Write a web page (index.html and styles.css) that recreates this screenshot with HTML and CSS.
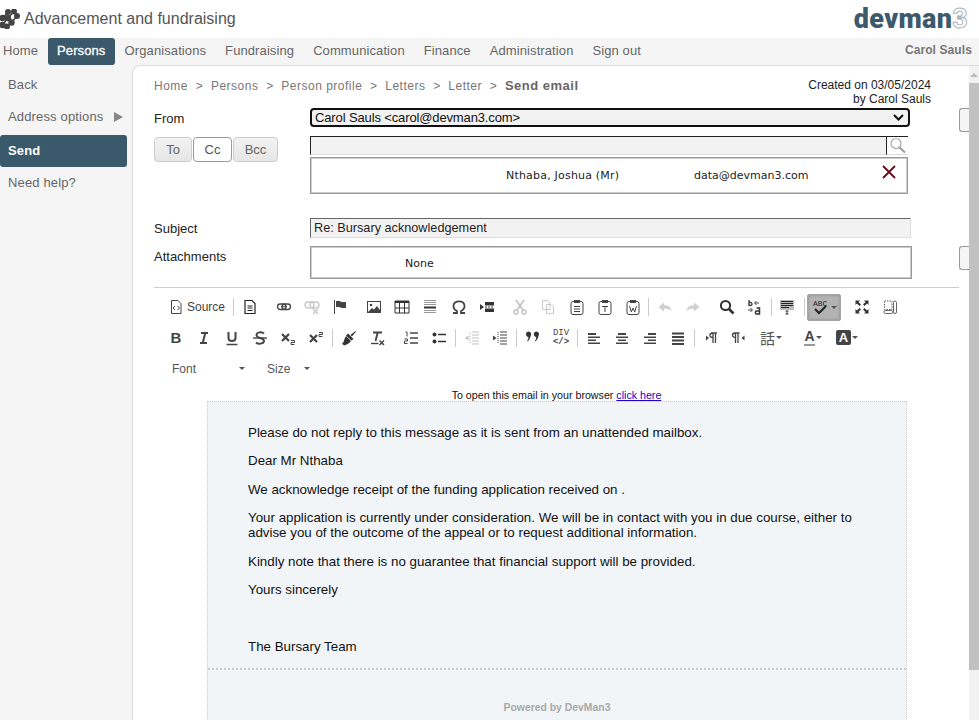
FILE: index.html
```html
<!DOCTYPE html>
<html lang="en">
<head>
    <meta charset="UTF-8">
    <meta name="viewport" content="width=device-width, initial-scale=1.0">
    <title>Send email</title>
    <link rel="stylesheet" href="styles.css">
</head>
<body>

<!-- header -->
<header class="top">
    <div class="brand">
        <svg class="brand-icon" width="20" height="20" viewBox="0 0 20 20">
            <g stroke="#444" stroke-width="1.6" stroke-linecap="round" fill="#444">
                <path d="M8 3 L2.5 9 M14 2.5 L8 9 L2.5 16 M17 7 L11.5 13.5 L7 17.5"/>
                <circle cx="8" cy="3" r="2.2"/>
                <circle cx="14" cy="2.5" r="2.2"/>
                <circle cx="2.5" cy="9" r="2.4"/>
                <circle cx="8" cy="9" r="2.4"/>
                <circle cx="17" cy="7" r="2.2"/>
                <circle cx="11.5" cy="13.5" r="2.4"/>
                <circle cx="2.5" cy="16" r="2.4"/>
                <circle cx="7" cy="17.5" r="2.2"/>
            </g>
        </svg>
        <span class="brand-title">Advancement and fundraising</span>
    </div>
    <div class="logo">de<span class="logo-v">v</span>man<span class="logo-three">3</span></div>
</header>

<nav class="menu">
    <a>Home</a>
    <a class="active">Persons</a>
    <a>Organisations</a>
    <a>Fundraising</a>
    <a>Communication</a>
    <a>Finance</a>
    <a>Administration</a>
    <a>Sign out</a>
    <span class="menu-user">Carol Sauls</span>
</nav>

<div class="layout">
    <aside class="side">
        <a>Back</a>
        <a class="has-arrow">Address options <span class="side-arrow"></span></a>
        <a class="active">Send</a>
        <a>Need help?</a>
    </aside>

    <main class="card">
        <div class="card-inner">
            <div class="crumbs-row">
                <div class="crumbs">
                    <span>Home</span><i>&gt;</i><span>Persons</span><i>&gt;</i><span>Person profile</span><i>&gt;</i><span>Letters</span><i>&gt;</i><span>Letter</span><i>&gt;</i><b>Send email</b>
                </div>
                <div class="created">Created on 03/05/2024<br>by Carol Sauls</div>
            </div>

            <div class="row row-from">
                <label class="lbl">From</label>
                <div class="fake-select">Carol Sauls &lt;carol@devman3.com&gt;
                    <svg width="11" height="7" viewBox="0 0 11 7"><path d="M1 1 L5.5 5.5 L10 1" fill="none" stroke="#111" stroke-width="2"/></svg>
                </div>
                <div class="clip-btn"></div>
            </div>

            <div class="row row-to">
                <div class="to-tabs">
                    <button class="tab tab-to">To</button>
                    <button class="tab tab-cc">Cc</button>
                    <button class="tab tab-bcc">Bcc</button>
                </div>
                <div class="to-fields">
                    <div class="search">
                        <div class="search-input"></div>
                        <div class="search-btn">
                            <svg width="18" height="17" viewBox="0 0 18 17"><circle cx="7" cy="6.5" r="5" fill="none" stroke="#aaa" stroke-width="1.2"/><path d="M10.5 10.5 L16 15.5" stroke="#999" stroke-width="1.8"/></svg>
                        </div>
                    </div>
                    <div class="recipient">
                        <span class="rec-name">Nthaba, Joshua (Mr)</span>
                        <span class="rec-mail">data@devman3.com</span>
                        <svg class="rec-x" width="14" height="14" viewBox="0 0 14 14"><path d="M1 1 L13 13 M13 1 L1 13" stroke="#6d0a1a" stroke-width="1.8"/></svg>
                    </div>
                </div>
            </div>

            <div class="row row-subject">
                <label class="lbl">Subject</label>
                <div class="subject">Re: Bursary acknowledgement</div>
            </div>

            <div class="row row-attach">
                <label class="lbl lbl-attach">Attachments</label>
                <div class="attach"><span>None</span></div>
                <div class="clip-btn"></div>
            </div>

            <hr class="rule">

            <!-- editor toolbar -->
            <div class="bar bar-1">
                <a class="tb tb-source">
                    <svg width="16" height="16" viewBox="0 0 16 16"><path d="M3.5 1.5 H10 L13 4.5 V14.5 H3.5 Z" fill="none" stroke="#444"/><path d="M7 7 L5 9 L7 11 M9.5 7 L11.5 9 L9.5 11" fill="none" stroke="#444"/></svg>
                    Source
                </a>
                <s class="sep"></s>
                <a class="tb"><svg width="16" height="16" viewBox="0 0 16 16"><path d="M3 1.5 H10 L13 4.5 V14.5 H3 Z" fill="none" stroke="#222" stroke-width="1.2"/><path d="M5.5 7 H10.5 M5.5 9 H10.5 M5.5 11.5 H10.5" stroke="#222"/></svg></a>
                <span class="gap"></span>
                <a class="tb"><svg width="16" height="16" viewBox="0 0 16 16"><rect x="1.5" y="5" width="8.5" height="5.5" rx="2.7" fill="none" stroke="#444" stroke-width="1.3"/><rect x="6" y="5" width="8.5" height="5.5" rx="2.7" fill="none" stroke="#444" stroke-width="1.3"/><path d="M5 7.7 H11" stroke="#444"/></svg></a>
                <a class="tb off"><svg width="16" height="16" viewBox="0 0 16 16"><rect x="1" y="3" width="9" height="6" rx="3" fill="none" stroke="#888" stroke-width="1.4"/><rect x="6" y="3" width="9" height="6" rx="3" fill="none" stroke="#888" stroke-width="1.4"/><path d="M9 10 L14 15 M14 10 L9 15" stroke="#888" stroke-width="1.4"/></svg></a>
                <a class="tb"><svg width="16" height="16" viewBox="0 0 16 16"><path d="M2.5 1 V15" stroke="#444"/><path d="M4 2 H8 L9 3 H14 V9 H9 L8 8 H4 Z" fill="#444"/></svg></a>
                <span class="gap"></span>
                <a class="tb"><svg width="16" height="16" viewBox="0 0 16 16"><rect x="1.5" y="2.5" width="13" height="11" fill="#fff" stroke="#444"/><circle cx="5" cy="6" r="1.3" fill="#444"/><path d="M2 13 L6 9 L8 10.5 L11 7 L14 11 V13 Z" fill="#444"/></svg></a>
                <a class="tb"><svg width="16" height="16" viewBox="0 0 16 16"><path d="M1 2 H15 V14 H1 Z" fill="#fff" stroke="#333"/><path d="M1 2 H15 V4 H1 Z" fill="#333"/><path d="M1 9 H15 M5.5 4 V14 M10.5 4 V14" stroke="#333"/></svg></a>
                <a class="tb"><svg width="16" height="16" viewBox="0 0 16 16"><path d="M2 1.5 H14 M2 3.5 H14 M2 5.5 H14 M2 11.5 H14 M2 13.5 H14" stroke="#999"/><path d="M2 7.5 H14 V9.5 H2 Z" fill="#333"/></svg></a>
                <span class="gap-1"></span>
                <a class="tb"><svg width="16" height="16" viewBox="0 0 16 16"><path d="M2 14 H6 V12 C3.5 11 2.5 9 2.5 7 C2.5 4 5 2.3 8 2.3 C11 2.3 13.5 4 13.5 7 C13.5 9 12.5 11 10 12 V14 H14" fill="none" stroke="#444" stroke-width="1.8"/></svg></a>
                <a class="tb"><svg width="16" height="16" viewBox="0 0 16 16"><path d="M1 5 L5 8 L1 11 Z" fill="#333"/><path d="M6 3 H15 V6.5 H6 Z M6 9.5 H15 V13 H6 Z" fill="#333"/><path d="M6 8 H15" stroke="#333" stroke-dasharray="2 1"/></svg></a>
                <span class="gap-5"></span>
                <a class="tb off"><svg width="16" height="16" viewBox="0 0 16 16"><path d="M4 1 L11 11 M12 1 L5 11" stroke="#777" stroke-width="1.6"/><circle cx="4" cy="13" r="2" fill="none" stroke="#777" stroke-width="1.4"/><circle cx="12" cy="13" r="2" fill="none" stroke="#777" stroke-width="1.4"/></svg></a>
                <a class="tb off"><svg width="16" height="16" viewBox="0 0 16 16"><path d="M2.5 1.5 H7.5 L10 4 V10.5 H2.5 Z M6.5 5.5 H11 L13.5 8 V14.5 H6.5 Z" fill="#fff" stroke="#888"/></svg></a>
                <span class="gap-1"></span>
                <a class="tb"><svg width="16" height="16" viewBox="0 0 16 16"><rect x="2" y="2.5" width="12" height="13" rx="2" fill="none" stroke="#444"/><rect x="5" y="1" width="6" height="3" fill="#444"/><path d="M5 7.5 H11 M5 10 H11 M5 12.5 H11" stroke="#444"/></svg></a>
                <a class="tb"><svg width="16" height="16" viewBox="0 0 16 16"><rect x="2" y="2.5" width="12" height="13" rx="2" fill="none" stroke="#444"/><rect x="5" y="1" width="6" height="3" fill="#444"/><path d="M5 7.5 H11 M8 7.5 V13" stroke="#444"/></svg></a>
                <a class="tb"><svg width="16" height="16" viewBox="0 0 16 16"><rect x="2" y="2.5" width="12" height="13" rx="2" fill="none" stroke="#444"/><rect x="5" y="1" width="6" height="3" fill="#444"/><path d="M4.5 7 L6.3 13 L8 9 L9.7 13 L11.5 7" fill="none" stroke="#444"/></svg></a>
                <s class="sep sep-a"></s>
                <a class="tb off"><svg width="16" height="16" viewBox="0 0 16 16"><path d="M1.5 8 L7 3.5 V6.3 C11 6.3 14 8 14.5 12 C12.5 10 10.5 9.7 7 9.7 V12.5 Z" fill="#999"/></svg></a>
                <a class="tb off"><svg width="16" height="16" viewBox="0 0 16 16"><path d="M14.5 8 L9 3.5 V6.3 C5 6.3 2 8 1.5 12 C3.5 10 5.5 9.7 9 9.7 V12.5 Z" fill="#999"/></svg></a>
                <span class="gap"></span>
                <a class="tb"><svg width="16" height="16" viewBox="0 0 16 16"><circle cx="6.5" cy="6.5" r="4.6" fill="none" stroke="#333" stroke-width="2"/><path d="M10 10 L14.5 14.5" stroke="#333" stroke-width="2.6"/></svg></a>
                <a class="tb"><svg width="16" height="16" viewBox="0 0 16 16"><path d="M2 1 V7 M2 4.5 C2 3 5 3 5 5 C5 7 2 7 2 5" fill="none" stroke="#333" stroke-width="1.3"/><path d="M12 4 H8 M9.5 2 L7.5 4 L9.5 6" fill="none" stroke="#444"/><path d="M1 11 H5 M3.5 9 L5.5 11 L3.5 13" fill="none" stroke="#444"/><path d="M9.5 9 H12.5 V15 H9.5 C8 15 8 12 9.5 12 H12.5" fill="none" stroke="#333" stroke-width="1.5"/></svg></a>
                <s class="sep sep-b"></s>
                <a class="tb"><svg width="16" height="16" viewBox="0 0 16 16"><rect x="1" y="1" width="14" height="10" fill="#bbb"/><path d="M2 2.5 H14 M2 4.5 H14 M2 6.5 H14 M2 8.5 H10" stroke="#222"/><path d="M6.5 12 H9.5 M8 12 V15 M6.5 15 H9.5" stroke="#333"/></svg></a>
                <s class="sep sep-c"></s>
                <a class="tb tb-spell">
                    <svg width="18" height="18" viewBox="0 0 18 18"><text x="1" y="8" class="abc">ABC</text><path d="M3 11 L7 15 L14 8" fill="none" stroke="#222" stroke-width="2"/></svg>
                    <em class="caret"></em>
                </a>
                <span class="gap-7"></span>
                <a class="tb"><svg width="16" height="16" viewBox="0 0 16 16"><path d="M1.5 1.5 H6 L4.5 3 L7 5.5 L5.5 7 L3 4.5 L1.5 6 Z M14.5 1.5 V6 L13 4.5 L10.5 7 L9 5.5 L11.5 3 L10 1.5 Z M1.5 14.5 V10 L3 11.5 L5.5 9 L7 10.5 L4.5 13 L6 14.5 Z M14.5 14.5 H10 L11.5 13 L9 10.5 L10.5 9 L13 11.5 L14.5 10 Z" fill="#333"/></svg></a>
                <a class="tb"><svg width="16" height="16" viewBox="0 0 16 16"><path d="M2.5 2 H10 V10.5 H2.5 Z" fill="none" stroke="#666" stroke-dasharray="1.5 1"/><rect x="2" y="11.5" width="9" height="3" rx="1.5" fill="none" stroke="#666"/><rect x="11.5" y="2" width="3" height="12.5" rx="1.5" fill="none" stroke="#666"/></svg></a>
            </div>

            <div class="bar bar-2">
                <a class="tb"><b class="fmt">B</b></a>
                <a class="tb"><svg width="16" height="16" viewBox="0 0 16 16"><path d="M5 3 H12 M4 13 H11 M9.3 3 L6.7 13" stroke="#444" stroke-width="2" fill="none"/></svg></a>
                <a class="tb"><svg width="16" height="16" viewBox="0 0 16 16"><path d="M4.5 2 V8 C4.5 12 11.5 12 11.5 8 V2" fill="none" stroke="#444" stroke-width="2"/><path d="M2.5 14.5 H13.5" stroke="#444" stroke-width="1.5"/></svg></a>
                <a class="tb"><svg width="16" height="16" viewBox="0 0 16 16"><path d="M12 3.5 C10 1.5 4.5 2 4.5 5 C4.5 9 12 7 12 11 C12 14 6 14.5 4 12.5" fill="none" stroke="#444" stroke-width="1.9"/><path d="M1 8 H15" stroke="#444" stroke-width="1.4"/></svg></a>
                <a class="tb"><svg width="16" height="16" viewBox="0 0 16 16"><path d="M2 4 L9 11 M9 4 L2 11" stroke="#444" stroke-width="2.2"/><path d="M11 10.5 H14.5 V12.5 H11 V14.5 H14.5" fill="none" stroke="#444"/></svg></a>
                <a class="tb"><svg width="16" height="16" viewBox="0 0 16 16"><path d="M2 5 L9 12 M9 5 L2 12" stroke="#444" stroke-width="2.2"/><path d="M11 2.5 H14.5 V4.5 H11 V6.5 H14.5" fill="none" stroke="#444"/></svg></a>
                <s class="sep"></s>
                <a class="tb"><svg width="16" height="16" viewBox="0 0 16 16"><path d="M9.5 5 L14.5 1 L15 1.5 L11 6.5 Z" fill="#333"/><path d="M7 3.5 L12.5 9 L10.5 10.5 L5 5.5 Z" fill="#333"/><path d="M5 6 L10 11 C8.5 13 6 15 3 15.5 L1 13.5 C3 13 3 9 5 6 Z" fill="#333"/></svg></a>
                <a class="tb"><svg width="16" height="16" viewBox="0 0 16 16"><path d="M4 2.5 H13 M8.7 2.5 L6.5 11" stroke="#444" stroke-width="1.9" fill="none"/><path d="M2 13.5 H9.5" stroke="#444" stroke-width="1.4"/><path d="M10.5 10.5 L15 15 M15 10.5 L10.5 15" stroke="#444" stroke-width="1.5"/></svg></a>
                <span class="gap"></span>
                <a class="tb"><svg width="16" height="16" viewBox="0 0 16 16"><path d="M7 3 H15 M7 8 H15 M7 13 H15" stroke="#444" stroke-width="1.3"/><path d="M2.5 2 H4 V6.5 M1.5 9 H4.5 V11 H1.5 V13.5 H4.5" fill="none" stroke="#444"/></svg></a>
                <a class="tb"><svg width="16" height="16" viewBox="0 0 16 16"><circle cx="3.5" cy="4.5" r="2" fill="#333"/><circle cx="3.5" cy="11.5" r="2" fill="#333"/><path d="M7 4.5 H15 M7 11.5 H15" stroke="#333" stroke-width="1.5"/></svg></a>
                <s class="sep"></s>
                <a class="tb off"><svg width="16" height="16" viewBox="0 0 16 16"><path d="M8 2 H15 M8 5 H15 M8 8 H15 M8 11 H15 M8 14 H15" stroke="#777"/><path d="M6 2 V14" stroke="#777" stroke-dasharray="1 1"/><path d="M1 8 L4.5 5.5 V10.5 Z" fill="#777"/></svg></a>
                <a class="tb"><svg width="16" height="16" viewBox="0 0 16 16"><path d="M8 2 H15 M8 5 H15 M8 8 H15 M8 11 H15 M8 14 H15" stroke="#444"/><path d="M6 2 V14" stroke="#444" stroke-dasharray="1 1"/><path d="M4.5 8 L1 5.5 V10.5 Z" fill="#444"/></svg></a>
                <s class="sep"></s>
                <a class="tb"><svg width="16" height="16" viewBox="0 0 16 16"><path d="M1 4 A2.6 2.6 0 1 1 5.8 5.5 C5.4 8 4 10.5 2.5 11.5 L2 11 C3 10 3.4 8.6 3.4 7 C2 7 1 5.6 1 4 Z M8.8 4 A2.6 2.6 0 1 1 13.6 5.5 C13.2 8 11.8 10.5 10.3 11.5 L9.8 11 C10.8 10 11.2 8.6 11.2 7 C9.8 7 8.8 5.6 8.8 4 Z" fill="#333"/></svg></a>
                <a class="tb tb-div"><span class="div-t">DIV</span><span class="div-c">&lt;/&gt;</span></a>
                <s class="sep"></s>
                <a class="tb"><svg width="16" height="16" viewBox="0 0 16 16"><path d="M2 3 H10 V5 H2 Z M2 6.5 H14 V8 H2 Z M2 9.5 H10 V11 H2 Z M2 12.5 H14 V14 H2 Z" fill="#444"/></svg></a>
                <a class="tb"><svg width="16" height="16" viewBox="0 0 16 16"><path d="M4 3 H12 V5 H4 Z M2 6.5 H14 V8 H2 Z M4 9.5 H12 V11 H4 Z M2 12.5 H14 V14 H2 Z" fill="#444"/></svg></a>
                <a class="tb"><svg width="16" height="16" viewBox="0 0 16 16"><path d="M6 3 H14 V5 H6 Z M2 6.5 H14 V8 H2 Z M6 9.5 H14 V11 H6 Z M2 12.5 H14 V14 H2 Z" fill="#444"/></svg></a>
                <a class="tb"><svg width="16" height="16" viewBox="0 0 16 16"><path d="M2 2.5 H14 V4.5 H2 Z M2 6 H14 V8 H2 Z M2 9.5 H14 V11.5 H2 Z M2 13 H14 V15 H2 Z" fill="#444"/></svg></a>
                <s class="sep"></s>
                <a class="tb"><svg width="16" height="16" viewBox="0 0 16 16"><path d="M3 5.5 L6 8 L3 10.5 Z" fill="#444"/><path d="M8 3 H14 M10 3 V13 M12.5 3 V13 M10 7.5 C8 7.5 7 6.5 7 5.2 C7 4 8 3 10 3" fill="none" stroke="#444" stroke-width="1.3"/></svg></a>
                <a class="tb"><svg width="16" height="16" viewBox="0 0 16 16"><path d="M13.5 5.5 L10.5 8 L13.5 10.5 Z" fill="#444"/><path d="M2.5 3 H8.5 M4.5 3 V13 M7 3 V13 M4.5 7.5 C2.5 7.5 1.5 6.5 1.5 5.2 C1.5 4 2.5 3 4.5 3" fill="none" stroke="#444" stroke-width="1.3"/></svg></a>
                <span class="gap-3"></span>
                <a class="tb tb-lang"><span class="lang-glyph">話</span><em class="caret caret-tight"></em></a>
                <span class="gap-11"></span>
                <a class="tb tb-color">
                    <span class="a-text">A</span>
                    <em class="caret caret-tight"></em>
                </a>
                <a class="tb tb-color tb-bg">
                    <span class="a-bg">A</span>
                    <em class="caret caret-tight"></em>
                </a>
            </div>

            <div class="bar bar-3">
                <a class="combo combo-font">Font<em class="caret"></em></a>
                <a class="combo combo-size">Size<em class="caret"></em></a>
            </div>

            <!-- email body -->
            <p class="open-link">To open this email in your browser <a href="#">click here</a></p>
            <div class="mail">
                <div class="mail-body">
                    <p>Please do not reply to this message as it is sent from an unattended mailbox.</p>
                    <p>Dear Mr Nthaba</p>
                    <p>We acknowledge receipt of the funding application received on .</p>
                    <p>Your application is currently under consideration. We will be in contact with you in due course, either to advise you of the outcome of the appeal or to request additional information.</p>
                    <p>Kindly note that there is no guarantee that financial support will be provided.</p>
                    <p>Yours sincerely</p>
                    <p class="signoff">The Bursary Team</p>
                </div>
                <div class="mail-foot">Powered by DevMan3</div>
            </div>
        </div>
        <div class="scroll">
            <div class="scroll-up"></div>
            <div class="scroll-thumb"></div>
        </div>
    </main>
</div>

</body>
</html>
```

FILE: styles.css
```css
html, body {
    margin: 0;
    padding: 0;
    height: 720px;
    overflow: hidden;
    background: #fff;
    font-family: "Liberation Sans", Arial, sans-serif;
}

.top {
    display: flex;
    justify-content: space-between;
    align-items: center;
    height: 38px;
    padding-right: 11px;
}

.brand {
    display: flex;
    align-items: center;
}

.brand-icon {
    margin-right: 4px;
}

.brand-title {
    font-size: 16px;
    color: #555;
}

.logo {
    font-family: Roboto, sans-serif;
    font-weight: 900;
    font-size: 27px;
    line-height: 30px;
    color: #3c5a6b;
    letter-spacing: 0.3px;
}

.logo-three {
    color: #fff;
    font-weight: 700;
    -webkit-text-stroke: 1px #aab4ba;
}

.menu {
    display: flex;
    height: 27px;
    background: #f5f5f5;
    font-size: 13px;
    color: #666;
}

.menu a {
    padding: 0 9.5px;
    line-height: 25px;
    letter-spacing: 0.1px;
    border-radius: 3px;
}

.menu a:first-child {
    padding: 0 10px 0 3px;
}

.menu a.active {
    width: 49px;
    padding: 0 9px;
    background: #3a5a6b;
    color: #fff;
    -webkit-text-stroke: 0.3px #fff;
}

.menu-user {
    margin-left: auto;
    padding-right: 7px;
    line-height: 24px;
    font-size: 12px;
    font-weight: bold;
    color: #777;
    letter-spacing: 0.1px;
}

.layout {
    display: flex;
    height: 655px;
    background: #f5f5f5;
}

.side {
    width: 132px;
    flex: none;
    padding-top: 4px;
    font-size: 13px;
    letter-spacing: 0.15px;
    color: #666;
}

.side a {
    display: block;
    width: 119px;
    height: 32px;
    padding-left: 8px;
    line-height: 32px;
    border-radius: 3px;
}

.side a.active {
    background: #3a5a6b;
    color: #fff;
    font-weight: bold;
    margin-top: 2px;
}

.side-arrow {
    display: inline-block;
    margin-left: 7px;
    border-left: 9px solid #888;
    border-top: 5px solid transparent;
    border-bottom: 5px solid transparent;
    vertical-align: -1px;
}

.card {
    flex: 1;
    display: flex;
    min-width: 0;
    background: #fff;
    border-top: 1px solid #ddd;
    border-left: 1px solid #ddd;
    border-top-left-radius: 8px;
    overflow: hidden;
}

.card-inner {
    flex: 1;
    min-width: 0;
    padding: 0 0 0 21px;
    overflow: hidden;
}

.scroll {
    width: 10px;
    flex: none;
    background: #f1f1f1;
}

.scroll-up {
    width: 0;
    margin: 7px auto 0;
    border-left: 4px solid transparent;
    border-right: 4px solid transparent;
    border-bottom: 4px solid #bbb;
}

.scroll-thumb {
    height: 587px;
    margin-top: 6px;
    background: #c1c1c1;
}

.crumbs-row {
    display: flex;
    justify-content: space-between;
    height: 42px;
    padding-right: 38px;
}

.crumbs {
    padding-top: 12px;
    font-size: 12px;
    line-height: 16px;
    color: #777;
    letter-spacing: 0.5px;
}

.crumbs i {
    font-style: normal;
    margin: 0 7.7px;
}

.crumbs b {
    font-size: 13px;
    color: #666;
    letter-spacing: 0.5px;
}

.created {
    padding-top: 12px;
    text-align: right;
    font-size: 12px;
    line-height: 14px;
    color: #222;
}

.row {
    display: flex;
    font-size: 14px;
    color: #222;
}

.lbl {
    width: 156px;
    flex: none;
    padding-top: 1px;
    font-size: 13px;
    line-height: 20px;
}

.row-from {
    height: 28px;
}

.fake-select {
    display: flex;
    justify-content: space-between;
    align-items: center;
    width: 596px;
    height: 15px;
    padding: 0 4px 0 3px;
    border: 2px solid #111;
    border-radius: 4px;
    background: #f2f2f2;
    font-size: 13px;
    letter-spacing: -0.13px;
    color: #111;
}

.clip-btn {
    width: 10px;
    height: 24px;
    margin-left: 49px;
    flex: none;
    border: 1px solid #999;
    border-right: 0;
    border-radius: 3px 0 0 3px;
    background: #f5f5f5;
    box-sizing: border-box;
}

.row-to {
    height: 82px;
}

.to-tabs {
    display: flex;
    width: 156px;
    flex: none;
    align-items: flex-start;
    padding-top: 1px;
}

.tab {
    height: 25px;
    padding: 0;
    border: 1px solid #ccc;
    border-radius: 4px;
    background: linear-gradient(#f2f2f2, #e6e6e6);
    font-family: inherit;
    font-size: 13px;
    color: #666;
}

.tab-to { width: 38px; }
.tab-cc { width: 39px; margin-left: 1px; background: #fff; border-color: #999; color: #555; }
.tab-bcc { width: 45px; margin-left: 1px; }

.to-fields {
    width: 598px;
}

.search {
    display: flex;
    width: 598px;
    height: 19px;
}

.search-input {
    flex: 1;
    border-top: 1px solid #222;
    border-left: 1px solid #222;
    border-bottom: 1px solid #ddd;
    background: #f2f2f2;
}

.search-btn {
    display: flex;
    width: 21px;
    justify-content: center;
    border-top: 1px solid #222;
    border-left: 1px solid #222;
    border-bottom: 1px solid #ddd;
}

.recipient {
    display: flex;
    align-items: center;
    height: 33px;
    margin-top: 2px;
    border: 1px solid #999;
    box-shadow: inset 0 0 0 1px #ccc;
    padding: 1px;
    font-family: "DejaVu Sans", sans-serif;
    font-size: 11px;
    color: #222;
}

.rec-name {
    width: 188px;
    margin-left: 194px;
    letter-spacing: 0.2px;
}

.rec-mail {
    width: 114px;
}

.rec-x {
    margin: 0 0 8px 74px;
}

.row-subject {
    height: 28px;
}

.subject {
    width: 596px;
    height: 18px;
    padding-left: 3px;
    border-top: 1px solid #666;
    border-left: 1px solid #666;
    border-right: 1px solid #ddd;
    border-bottom: 1px solid #ddd;
    background: #f2f2f2;
    font-size: 12.7px;
    line-height: 18px;
    color: #222;
}

.row-attach {
    height: 41px;
}

.attach {
    width: 598px;
    height: 29px;
    padding: 1px;
    border: 1px solid #999;
    box-shadow: inset 0 0 0 1px #ccc;
    font-family: "DejaVu Sans", sans-serif;
    font-size: 11px;
    line-height: 31px;
}

.attach span {
    margin-left: 93px;
}

.row-attach .clip-btn {
    margin-left: 47px;
}

.rule {
    height: 1px;
    margin: 0 10px 0 0;
    border: 0;
    background: #ccc;
}

.bar {
    display: flex;
    align-items: center;
    margin-left: 8px;
    height: 31px;
}

.bar-1 {
    margin-top: 4px;
    height: 30px;
}

.tb {
    display: flex;
    align-items: center;
    justify-content: center;
    width: 28px;
    height: 26px;
    flex: none;
    font-size: 12px;
    color: #444;
}

.tb.off svg {
    opacity: 0.45;
}

.tb-source {
    width: 69px;
    justify-content: flex-start;
    padding-left: 6px;
    box-sizing: border-box;
    gap: 3px;
}

.gap { width: 6px; flex: none; }
.gap-1 { width: 1px; flex: none; }
.gap-3 { width: 3px; flex: none; }
.gap-5 { width: 5px; flex: none; }
.gap-7 { width: 7px; flex: none; }
.gap-11 { width: 11px; flex: none; }

.sep {
    display: block;
    width: 1px;
    height: 18px;
    margin: 0 2px;
    background: #ccc;
    flex: none;
}

.sep-a { margin: 0 2px 0 1px; }
.sep-b { margin: 0 1px 0 2px; }
.sep-c { margin: 0 2px 0 3px; }

.tb-spell {
    width: 34px;
    height: 27px;
    background: #b3b3b3;
    border: 1px solid #a6a6a6;
    border-radius: 2px;
    box-sizing: border-box;
    box-shadow: inset 0 0 3px #888;
}

.abc {
    font-family: "Liberation Mono", monospace;
    font-size: 8px;
    fill: #222;
}

.caret {
    display: inline-block;
    margin-left: 1px;
    border-left: 3px solid transparent;
    border-right: 3px solid transparent;
    border-top: 3px solid #555;
}

.fmt {
    font-family: "Liberation Sans", sans-serif;
    font-size: 15px;
    color: #444;
}

.tb-div {
    flex-direction: column;
    font-size: 9px;
    line-height: 9px;
    font-family: "Liberation Mono", monospace;
}

.div-c {
    font-weight: bold;
}

.tb-lang {
    width: 30px;
}

.lang-glyph {
    font-family: "Noto Sans CJK JP", sans-serif;
    font-size: 15px;
    line-height: 16px;
    color: #555;
}

.tb-color {
    width: 32px;
}

.tb-bg {
    width: 30px;
    margin-left: 3px;
}

.a-text {
    font-size: 14px;
    font-weight: bold;
    line-height: 15px;
    color: #444;
    border-bottom: 2px solid #999;
}

.a-bg {
    display: block;
    width: 15px;
    height: 15px;
    border-radius: 2px;
    background: #444;
    color: #fff;
    font-size: 13px;
    font-weight: bold;
    line-height: 15px;
    text-align: center;
}

.bar-3 {
    height: 31px;
    font-size: 12px;
    color: #555;
}

.combo {
    display: flex;
    align-items: center;
    justify-content: space-between;
    box-sizing: border-box;
}

.combo-font {
    width: 83px;
    padding-left: 10px;
}

.combo-size {
    width: 43px;
    margin-left: 22px;
}

.open-link {
    width: 805px;
    margin: 5px 0 0;
    text-align: center;
    font-size: 10.67px;
    line-height: 12px;
    color: #111;
}

.open-link a {
    color: #2200cc;
}

.mail {
    width: 698px;
    margin: 0 0 0 53px;
    border: 1px dotted #ccc;
    background: #f1f5f8;
    font-size: 13.33px;
    color: #111;
}

.mail-body {
    padding: 23px 50px 14px 40px;
    border-bottom: 2px dotted #ccc;
}

.mail-body p {
    margin: 0 0 13.4px;
    line-height: 15px;
}

.mail-body .signoff {
    margin: 41.6px 0 0;
}

.mail-foot {
    padding-top: 32px;
    height: 40px;
    text-align: center;
    font-size: 10.4px;
    font-weight: bold;
    color: #aaa;
}
```
